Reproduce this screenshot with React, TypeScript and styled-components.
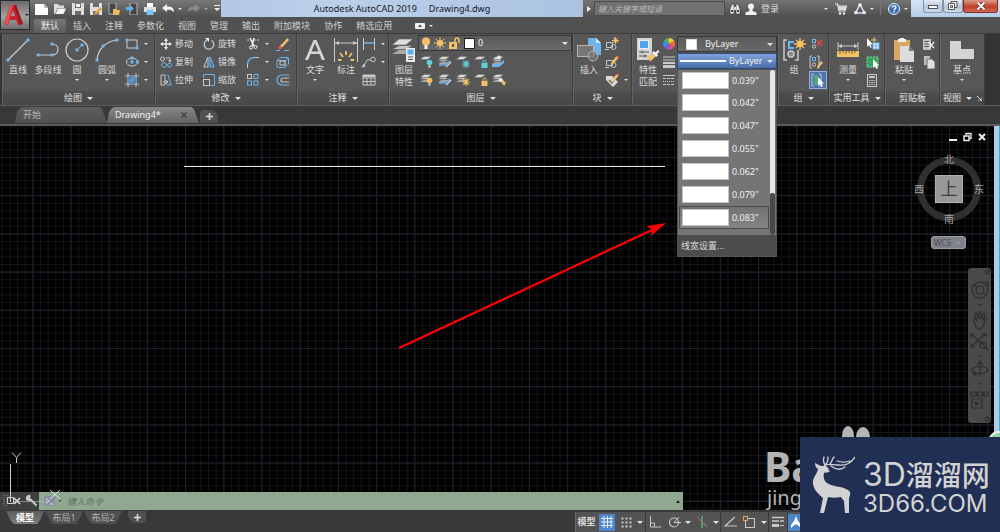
import React from 'react';
import styled, { createGlobalStyle, css } from 'styled-components';

const G = '#c9c9c9';
const B = '#6db5ee';
const Y = '#f3c266';
const T = '#5fd0dc';

const Global = createGlobalStyle`
  * { box-sizing: border-box; }
  html, body { margin: 0; padding: 0; background: #000; }
  body, button, input, select {
    font-family: "Noto Sans", "Noto Sans CJK SC", sans-serif;
    font-size: 9px;
    line-height: 12px;
    color: #dcdcdc;
  }
  button { margin: 0; padding: 0; border: 0; background: none; cursor: pointer; }
  svg { display: block; flex: none; }
`;

/* ---------- shared pieces ---------- */

type IcProps = { w: number; h: number; children: React.ReactNode };
const Ic = ({ w, h, children }: IcProps) => (
  <svg width={w} height={h} viewBox={`0 0 ${w} ${h}`} fill="none" aria-hidden="true">
    {children}
  </svg>
);

const Caret = styled.span<{ $c?: string }>`
  flex: none;
  width: 0;
  height: 0;
  border: 3px solid transparent;
  border-top-color: ${(p) => p.$c ?? '#e4e4e4'};
  border-bottom: 0;
`;

const SmallCaret = styled(Caret)`
  border-width: 2px;
  border-bottom: 0;
`;

/* ---------- header ---------- */

const Page = styled.div`
  position: relative;
  display: flex;
  flex-direction: column;
  min-height: 100vh;
  overflow: hidden;
  background: #383838;
`;

const Header = styled.header`
  display: flex;
  height: 33px;
  background: #515151;
`;

const AppButton = styled.button`
  display: flex;
  align-items: center;
  gap: 2px;
  flex: none;
  width: 30px;
  height: 30px;
  padding-left: 2px;
  border: 1px solid #2b2b2b;
  background: linear-gradient(#6a6a6a, #a2a2a2 55%, #6f6f6f);
`;

const HeaderMain = styled.div`
  flex: 1;
  min-width: 0;
`;

const TitleBar = styled.div`
  display: flex;
  height: 17px;
  background: linear-gradient(90deg, #9fb6d6, #bcd0ea 30%, #a9c1e0 60%, #bdd3ee);
`;

const QuickAccess = styled.div`
  display: flex;
  align-items: center;
  gap: 6px;
  flex: none;
  width: 191px;
  padding-left: 5px;
  background: linear-gradient(#787878, #5b5b5b 70%, #505050);
`;

const QuickButton = styled.button`
  display: flex;
  align-items: center;
  justify-content: center;
  gap: 4px;
  height: 16px;
`;

const Title = styled.h1`
  flex: 1;
  margin: 0;
  display: flex;
  align-items: center;
  justify-content: center;
  gap: 12px;
  font-size: 9px;
  font-weight: 400;
  color: #15181f;
  white-space: nowrap;
`;

const InfoBar = styled.div`
  display: flex;
  align-items: center;
  flex: none;
  width: 328px;
  background: linear-gradient(#747474, #5a5a5a 70%, #4e4e4e);
`;

const SearchToggle = styled.button`
  display: flex;
  align-items: center;
  justify-content: center;
  width: 11px;
  height: 17px;
`;

const SearchInput = styled.input`
  width: 131px;
  height: 15px;
  padding: 0 3px;
  border: 1px solid #4c4c4c;
  background: #717171;
  font-size: 8px;
  font-style: italic;
  &::placeholder { color: #b8b8b8; opacity: 1; }
`;

const InfoButton = styled.button<{ $grow?: boolean }>`
  display: flex;
  align-items: center;
  gap: 4px;
  height: 16px;
  padding-left: 4px;
  ${(p) => p.$grow && css`flex: 1;`}
`;

const InfoTools = styled.div`
  display: flex;
  align-items: center;
  gap: 3px;
  margin-right: 3px;
`;

const InfoDivider = styled.span`
  width: 1px;
  height: 13px;
  margin-left: 3px;
  background: #777;
`;

const WindowButtons = styled.div`
  display: flex;
  flex: none;
  width: 89px;
  padding-left: 12px;
  align-items: flex-start;
  background: linear-gradient(#d6e4f5, #b5cdea);
`;

const WindowButton = styled.button<{ $close?: boolean }>`
  display: flex;
  align-items: center;
  justify-content: center;
  width: ${(p) => (p.$close ? 35 : 20)}px;
  height: 13px;
  border: 1px solid ${(p) => (p.$close ? '#7d3028' : '#8494aa')};
  border-top: 0;
  border-radius: 0 0 3px 3px;
  background: ${(p) =>
    p.$close ? 'linear-gradient(#dd9a8c, #c3402c 55%, #cf6a50)' : 'linear-gradient(#e6edf6, #b7c6da 55%, #ccd9ea)'};
`;

const RibbonTabs = styled.nav`
  display: flex;
  align-items: stretch;
  height: 16px;
  padding: 2px 0 0 4px;
`;

const RibbonTab = styled.button<{ $active?: boolean }>`
  padding: 0 7px;
  white-space: nowrap;
  color: ${(p) => (p.$active ? '#f0f0f0' : '#cfcfcf')};
  ${(p) =>
    p.$active &&
    css`
      background: linear-gradient(#777, #5d5d5d);
      border-radius: 2px 2px 0 0;
    `}
`;

const RibbonToggle = styled.button`
  display: flex;
  align-items: center;
  gap: 4px;
  margin-left: 16px;
`;

/* ---------- ribbon ---------- */

const Ribbon = styled.section`
  display: flex;
  height: 73px;
  padding-left: 2px;
  background: #343434;
  border-top: 1px solid #3b3b3b;
  border-bottom: 1px solid #5e5e5e;
`;

const PanelBox = styled.section<{ $w: number }>`
  display: flex;
  flex-direction: column;
  flex: none;
  width: ${(p) => p.$w}px;
  border-right: 1px solid #3e3e3e;
  border-left: 1px solid #636363;
  background: #575757;
`;

const PanelBody = styled.div`
  display: flex;
  flex: 1;
  padding-top: 1px;
`;

const PanelFooter = styled.button`
  display: flex;
  align-items: center;
  justify-content: center;
  gap: 5px;
  height: 14px;
  background: linear-gradient(#4f4f4f, #474747);
  color: #e0e0e0;
`;

const Panel = ({ w, title, caret = true, extra, children }: {
  w: number; title?: string; caret?: boolean; extra?: React.ReactNode; children: React.ReactNode;
}) => (
  <PanelBox $w={w}>
    <PanelBody>{children}</PanelBody>
    <PanelFooter aria-label={title ?? 'panel'}>
      {title}
      {title && caret && <Caret />}
      {extra}
    </PanelFooter>
  </PanelBox>
);

const BigButtonBox = styled.button<{ $w: number }>`
  display: flex;
  flex-direction: column;
  align-items: center;
  flex: none;
  width: ${(p) => p.$w}px;
  height: 56px;
  white-space: nowrap;
`;

const BigIcon = styled.span`
  display: flex;
  align-items: center;
  height: 29px;
`;

const BigCaret = styled(SmallCaret)`
  margin-top: 3px;
`;

const BigButton = ({ w = 30, lines, caret, children }: {
  w?: number; lines: string[]; caret?: boolean; children: React.ReactNode;
}) => (
  <BigButtonBox $w={w}>
    <BigIcon>{children}</BigIcon>
    {lines.map((l) => <span key={l}>{l}</span>)}
    {caret && <BigCaret />}
  </BigButtonBox>
);

const Stack = styled.div<{ $w: number; $ml?: number }>`
  display: flex;
  flex-direction: column;
  flex: none;
  width: ${(p) => p.$w}px;
  margin-left: ${(p) => p.$ml ?? 0}px;
`;

const ToolButton = styled.button<{ $on?: boolean }>`
  display: flex;
  align-items: center;
  gap: 3px;
  height: 18px;
  white-space: nowrap;
  ${(p) =>
    p.$on &&
    css`
      justify-content: center;
      border: 1px solid #8fb2e0;
      background: #4e74ad;
    `}
`;

const ToolCaret = styled(SmallCaret)`
  margin-left: 2px;
`;

const LayerArea = styled.div`
  display: flex;
  flex-direction: column;
  flex: 1;
`;

const Field = styled.div<{ $blue?: boolean }>`
  position: relative;
  display: flex;
  align-items: center;
  gap: 3px;
  height: 16px;
  margin-bottom: 1px;
  padding: 0 3px 0 2px;
  border: 1px solid ${(p) => (p.$blue ? '#2e4a78' : '#383838')};
  background: ${(p) => (p.$blue ? 'linear-gradient(#7ea2da, #4a6ea8)' : 'linear-gradient(#5a5a5a, #6a6a6a)')};
`;

const Select = styled.select`
  flex: 1;
  min-width: 0;
  height: 14px;
  padding: 0;
  border: 0;
  background: transparent;
  appearance: none;
  outline: 0;
  color: #f0f0f0;
`;

const Swatch = styled.span`
  width: 11px;
  height: 11px;
  margin: 0 5px 0 6px;
  background: #fff;
  border: 1px solid #ddd;
`;

const LayerSwatch = styled(Swatch)`
  margin: 0;
  border-color: #222;
`;

const LineSample = styled.span`
  width: 46px;
  height: 2px;
  background: #fff;
`;

const IconRow = styled.div`
  display: flex;
  height: 18px;
`;

const IconButton = styled.button`
  display: flex;
  align-items: center;
  justify-content: center;
  width: 18px;
  height: 18px;
`;

const Combos = styled.div`
  flex: 1;
  padding-top: 1px;
`;

const Menu = styled.div`
  position: absolute;
  z-index: 5;
  top: 15px;
  left: -1px;
  right: -1px;
  border: 1px solid #555;
  background: #757575;
`;

const MenuScroll = styled.div`
  display: flex;
  height: 165px;
`;

const MenuList = styled.div`
  flex: 1;
  padding-left: 1px;
`;

const MenuRow = styled.button<{ $sel?: boolean; $first?: boolean }>`
  display: flex;
  align-items: center;
  gap: 3px;
  width: 100%;
  height: ${(p) => (p.$first ? 21 : 23)}px;
  padding-left: 2px;
  border: 1px solid ${(p) => (p.$sel ? '#4c4c4c' : 'transparent')};
  background: ${(p) => (p.$sel ? 'linear-gradient(#727272, #858585)' : 'none')};
  color: #f0f0f0;
`;

const Weight = styled.span`
  width: 47px;
  height: 17px;
  background: #fff;
  border: 1px solid #c4c4c4;
`;

const MenuTrack = styled.div`
  display: flex;
  flex-direction: column;
  justify-content: flex-end;
  width: 5px;
  margin: 0 1px;
  border-radius: 2px;
  background: #e6e6e6;
`;

const MenuThumb = styled.div`
  height: 42px;
  border-radius: 2px;
  background: #484848;
`;

const MenuFooter = styled.button`
  display: block;
  width: 100%;
  height: 21px;
  padding-left: 3px;
  background: #4c4c4c;
  text-align: left;
`;

/* ---------- file tabs ---------- */

const FileTabs = styled.nav`
  display: flex;
  align-items: flex-end;
  height: 20px;
  padding: 0 0 1px 15px;
  background: #383838;
  border-bottom: 2px solid #5a5a5a;
`;

const FileTab = styled.button<{ $active?: boolean }>`
  display: flex;
  align-items: center;
  justify-content: space-between;
  width: 92px;
  height: 16px;
  padding: 0 12px 0 8px;
  color: ${(p) => (p.$active ? '#f2f2f2' : '#b5b5b5')};
  background: ${(p) => (p.$active ? 'linear-gradient(#888, #626262)' : 'linear-gradient(#5e5e5e, #505050)')};
  clip-path: polygon(0 100%, 2px 5px, 5px 1px, 8px 0, calc(100% - 8px) 0, calc(100% - 5px) 2px, 100% 100%);
`;

const AddTab = styled.button<{ $down?: boolean }>`
  display: flex;
  align-items: center;
  justify-content: center;
  width: 18px;
  height: ${(p) => (p.$down ? 12 : 13)}px;
  margin-left: ${(p) => (p.$down ? 5 : 1)}px;
  border-radius: ${(p) => (p.$down ? '0 0 4px 8px' : '4px 8px 0 0')};
  background: #505050;
`;

/* ---------- drawing area ---------- */

const Canvas = styled.main`
  position: relative;
  flex: 1;
  min-height: 384px;
  overflow: hidden;
  background: #000;
`;

const Drawing = styled.svg`
  position: absolute;
  inset: 0;
  width: 100%;
  height: 100%;
`;

const Edge = styled.div`
  position: absolute;
  top: 0;
  bottom: 0;
  right: 0;
  width: 6px;
  border-right: 1px solid #1fb4e0;
  background: #b4cae6;
`;

const DocButtons = styled.div`
  position: absolute;
  top: 6px;
  right: 14px;
  display: flex;
  gap: 6px;
`;

const ViewCube = styled.div`
  position: absolute;
  top: 26px;
  right: 15px;
  display: grid;
  grid-template-columns: 12px 48px 12px;
  grid-template-rows: 14px 46px 14px;
  place-items: center;
  width: 72px;
  color: #a5a5a5;
`;

const Ring = styled.span`
  position: absolute;
  top: 5px;
  left: 4px;
  width: 64px;
  height: 64px;
  border: 7px solid #303030;
  border-radius: 50%;
`;

const Compass = styled.span<{ $area: string }>`
  position: relative;
  grid-area: ${(p) => p.$area};
  font-size: 10px;
`;

const CubeFace = styled.button`
  position: relative;
  grid-area: 2 / 2;
  width: 28px;
  height: 28px;
  background: #989898;
  border: 1px solid #b0b0b0;
  font-size: 17px;
  line-height: 24px;
  color: #3c3e42;
`;

const Wcs = styled.button`
  position: absolute;
  top: 110px;
  right: 34px;
  display: flex;
  align-items: center;
  justify-content: space-between;
  width: 35px;
  height: 13px;
  padding: 0 5px 0 2px;
  border: 1px solid #9a9ca2;
  border-radius: 3px;
  background: #80828a;
  color: #4a4c52;
  font-size: 8px;
`;

const NavBar = styled.div`
  position: absolute;
  top: 142px;
  right: 9px;
  display: flex;
  flex-direction: column;
  align-items: center;
  width: 23px;
  height: 155px;
  border-radius: 3px;
  background: #4a4a4a;
`;

const Watermark = styled.div`
  position: absolute;
  right: 146px;
  bottom: -1px;
  width: 87px;
  color: #b4b4b4;
`;

const WatermarkName = styled.div`
  margin-left: -3px;
  font-size: 41px;
  line-height: 38px;
  font-weight: 700;
`;

const WatermarkSub = styled.div`
  font-size: 20px;
  line-height: 26px;
`;

const CommandLine = styled.div`
  position: absolute;
  left: 0;
  bottom: 0;
  display: flex;
  align-items: center;
  width: 683px;
  max-width: 100%;
  height: 18px;
  background: #8fa991;
`;

const CommandTools = styled.div`
  display: flex;
  align-items: center;
  gap: 5px;
  width: 39px;
  height: 18px;
  padding-left: 3px;
  background: #404040;
`;

const CommandInput = styled.input`
  flex: 1;
  min-width: 0;
  height: 16px;
  margin-left: 3px;
  border: 0;
  background: transparent;
  font-style: italic;
  outline: 0;
  &::placeholder { color: #5f7062; opacity: 1; }
`;

const CommandPrompt = styled.button`
  display: flex;
  align-items: center;
  gap: 3px;
  margin-left: 5px;
`;

const Up = styled.span`
  margin-right: 3px;
  border: 2px solid transparent;
  border-top: 0;
  border-bottom: 3px solid #222;
`;

const Ucs = styled.svg`
  position: absolute;
  left: 0;
  bottom: 0;
`;

/* ---------- bottom bar ---------- */

const BottomBar = styled.footer`
  display: flex;
  justify-content: space-between;
  height: 22px;
  background: #393939;
`;

const LayoutTabs = styled.nav`
  display: flex;
  align-items: flex-start;
  gap: 1px;
  padding: 1px 0 0 6px;
`;

const LayoutTab = styled.button<{ $active?: boolean }>`
  width: 38px;
  height: 13px;
  color: ${(p) => (p.$active ? '#fff' : '#b4b4b4')};
  font-weight: ${(p) => (p.$active ? 700 : 400)};
  background: ${(p) => (p.$active ? 'linear-gradient(#5c5c5c, #7f7f7f)' : '#505050')};
  clip-path: polygon(0 0, 100% 0, calc(100% - 4px) 9px, calc(100% - 7px) 100%, 8px 100%, 5px 10px);
`;

const StatusBar = styled.div`
  display: flex;
  align-items: center;
  width: 425px;
  margin-top: 2px;
  border-left: 1px solid #6a6a6a;
  background: #535353;
`;

const StatusGroup = styled.div<{ $w: number }>`
  display: flex;
  align-items: center;
  justify-content: space-around;
  width: ${(p) => p.$w}px;
  height: 20px;
  border-right: 1px solid #3a3a3a;
`;

const StatusButton = styled.button<{ $on?: boolean; $strong?: boolean }>`
  display: flex;
  align-items: center;
  justify-content: center;
  height: 17px;
  min-width: 16px;
  font-weight: ${(p) => (p.$strong ? 700 : 400)};
  background: ${(p) => (p.$on ? '#4d86c8' : 'none')};
`;

/* ---------- logo badge ---------- */

const Badge = styled.aside`
  position: absolute;
  z-index: 6;
  right: 0;
  bottom: 0;
  display: flex;
  align-items: center;
  gap: 8px;
  width: 200px;
  height: 95px;
  padding-left: 11px;
  background: #212f55;
  color: #d2d2d2;
`;

const BadgeText = styled.div`
  padding-top: 6px;
`;

const BadgeName = styled.div`
  display: flex;
  align-items: baseline;
  font-size: 28px;
  line-height: 32px;
  font-weight: 500;
  white-space: nowrap;
`;

const BadgeLatin = styled.span`
  font-family: Inter, sans-serif;
  font-size: 32px;
  font-weight: 400;
`;

const BadgeSite = styled.div`
  font-family: Inter, sans-serif;
  font-size: 24px;
  font-weight: 400;
  line-height: 26px;
`;

/* ---------- icons ---------- */

const dot = (x: number, y: number) => <rect key={`${x}-${y}`} x={x - 1.5} y={y - 1.5} width="3" height="3" fill={B} />;

const LineIcon = () => <Ic w={24} h={24}><path d="M2 22L22 2" stroke={G} strokeWidth="1.2" />{dot(2, 22)}{dot(22, 2)}</Ic>;
const PolyIcon = () => <Ic w={24} h={24}><path d="M2 17h14c8 0 8-11 0-11" stroke={G} strokeWidth="1.2" />{dot(2, 17)}{dot(16, 17)}{dot(16, 6)}</Ic>;
const CircleIcon = () => <Ic w={24} h={24}><circle cx="12" cy="12" r="11" stroke={G} strokeWidth="1.2" /><path d="M12 12l5-5" stroke={B} />{dot(12, 12)}{dot(17, 7)}</Ic>;
const ArcIcon = () => <Ic w={24} h={24}><path d="M2 22C3 11 11 3 22 2" stroke={G} strokeWidth="1.2" />{dot(2, 22)}{dot(8, 8)}{dot(22, 2)}</Ic>;
const RectIcon = () => <Ic w={14} h={12}><rect x="2" y="2" width="10" height="8" stroke={G} />{dot(2, 2)}{dot(12, 10)}</Ic>;
const EllipseIcon = () => <Ic w={14} h={12}><ellipse cx="7" cy="6" rx="5.5" ry="4" stroke={G} />{dot(7, 6)}{dot(12.5, 6)}{dot(7, 2)}</Ic>;
const HatchIcon = () => <Ic w={14} h={14}><path d="M3 0v14M11 0v14M0 3h14M0 11h14" stroke={G} /><rect x="3.5" y="3.5" width="7" height="7" fill="#3d78b0" /><path d="M4 8l4-4M4 10l6-6M6 10l4-4" stroke={B} /></Ic>;

const MoveIcon = () => <Ic w={12} h={12}><path d="M6 1v10M1 6h10" stroke="#e8e8e8" strokeWidth="1.4" /><path d="M6 0l2 3H4zM6 12l2-3H4zM0 6l3-2v4zM12 6L9 4v4z" fill="#e8e8e8" /></Ic>;
const RotateIcon = () => <Ic w={12} h={12}><path d="M8.500 2.300a4.800 4.800 0 1 1-4.600-.2" stroke={G} strokeWidth="1.3" /><path d="M2 0h4v4z" fill="#eee" /></Ic>;
const CopyIcon = () => <Ic w={12} h={12}><circle cx="2.500" cy="3" r="2" stroke={G} /><path d="M6 2h4v3M8.500 4L10 6l1.500-2" stroke={G} /><circle cx="4" cy="9" r="2.400" stroke={B} /><circle cx="9.500" cy="9" r="2" stroke={B} /></Ic>;
const MirrorIcon = () => <Ic w={12} h={12}><path d="M5 1v10H.8z" stroke={G} /><path d="M7 1v10h4.200z" stroke={B} fill="#3d78b0" /></Ic>;
const StretchIcon = () => <Ic w={12} h={12}><path d="M1 1h4v10H1z" stroke={G} /><path d="M7 1h1l3 10H7" stroke={B} /><path d="M3 8h4M6 6l2 2-2 2" stroke={G} /></Ic>;
const ScaleIcon = () => <Ic w={12} h={12}><path d="M.5 4V.5h11v11H7" stroke={B} /><rect x=".5" y="5.500" width="6" height="6" stroke={G} /></Ic>;
const TrimIcon = () => <Ic w={14} h={12}><path d="M1 2h4M8 2h5" stroke={G} strokeDasharray="2 1" /><path d="M4 0l4 8M8 0L6 8" stroke="#eee" strokeWidth="1.500" /><circle cx="5" cy="9.500" r="1.500" stroke="#eee" /><circle cx="9.500" cy="9" r="1.500" stroke="#eee" /></Ic>;
const FilletIcon = () => <Ic w={14} h={12}><path d="M1.500 8C2 4 5 1.500 9 1.500" stroke={B} strokeWidth="1.300" /><path d="M1.500 12V8M9 1.500h4" stroke={G} /></Ic>;
const ArrayIcon = () => <Ic w={14} h={12}><rect x="1.500" y=".5" width="4" height="4" stroke={G} /><rect x="8" y=".5" width="4" height="4" stroke={B} /><rect x="1.500" y="7" width="4" height="4" stroke={B} /><rect x="8" y="7" width="4" height="4" stroke={B} /></Ic>;
const EraseIcon = () => <Ic w={14} h={13}><path d="M11.500 0L13 2 6 9.500 4 8z" fill={Y} /><path d="M4 7.500L6.500 10 4 11.500 2 10z" fill="#ef5b45" /><path d="M0 12.500h4M8 12.500h5" stroke={B} /></Ic>;
const ExplodeIcon = () => <Ic w={14} h={12}><path d="M1 4.500l3-3h8l-2 3zM1 4.500v7h8v-7M9.500 11l3-3V2" stroke={B} /><rect x="4" y="5" width="5" height="4" stroke={G} /></Ic>;
const OffsetIcon = () => <Ic w={14} h={12}><path d="M13 1H6a4.500 4.500 0 0 0 0 10h7" stroke={B} strokeWidth="1.200" /><path d="M13 4H7a2 2 0 0 0 0 4h6" stroke={G} strokeWidth="1.200" /></Ic>;

const TextIcon = () => <Ic w={20} h={22}><path d="M8.500 1h3L20 21h-3.200l-2.300-6h-9l-2.300 6H0zM10 4l-3.500 8.500h7z" fill="#d6d6d6" /></Ic>;
const DimIcon = () => <Ic w={26} h={24}><path d="M1.500 0v24M24.500 0v24" stroke={G} /><path d="M2 5h22" stroke={G} /><path d="M2 5l4-2v4zM24 5l-4-2v4z" fill={G} /><path d="M13 13v4M5 22h3.500M17.500 22H21M7 15l3 4M19 15l-3 4" stroke={Y} strokeWidth="1.800" /></Ic>;
const LinearIcon = () => <Ic w={14} h={12}><path d="M1.500 0v12M12.500 0v12" stroke={G} /><path d="M2 5h10" stroke={B} strokeWidth="1.500" /></Ic>;
const LeaderIcon = () => <Ic w={14} h={12}><path d="M1 11l4-7h4" stroke={G} /><circle cx="11" cy="3.500" r="2.300" stroke={G} /><path d="M0 12l1-4 3 2z" fill={G} /></Ic>;
const TableIcon = () => <Ic w={14} h={12}><path d="M1 1h12v10H1zM1 4h12M1 7.500h12M5 4v7M9 4v7" stroke={G} /><path d="M1 2h12" stroke={G} strokeWidth="2" /></Ic>;

const LayerPropsIcon = () => (
  <Ic w={24} h={26}>
    <path d="M0 17l7-4h14l-7 4z" fill="#a9a9a9" /><path d="M0 12.500l7-4h14l-7 4z" fill="#c4c4c4" stroke="#575757" strokeWidth=".6" />
    <path d="M0 8l7-6h14l-7 6z" fill="#dedede" stroke="#575757" strokeWidth=".6" />
    <rect x="14" y="11" width="9" height="14" fill="#ececec" /><rect x="15.500" y="12.500" width="6" height="5" fill="#57aef2" /><path d="M16 20h5M16 22.500h5" stroke="#555" />
  </Ic>
);
const BulbIcon = () => <Ic w={10} h={12}><circle cx="5" cy="4.500" r="4" fill={Y} /><rect x="3.500" y="8" width="3" height="4" fill="#eee" /></Ic>;
const SunIcon = () => <Ic w={12} h={12}><circle cx="6" cy="6" r="3" fill={Y} /><path d="M6 0v12M0 6h12M1.800 1.800l8.400 8.400M10.200 1.800l-8.400 8.400" stroke={Y} /></Ic>;
const LockIcon = () => <Ic w={12} h={12}><rect x="0" y="5" width="8" height="7" fill={Y} /><path d="M6 5V3a2 2 0 0 1 4 0v3" stroke={Y} strokeWidth="1.500" /><rect x="3" y="7" width="2" height="3" fill="#555" /></Ic>;

const Sheets = ({ n, children }: { n: number; children?: React.ReactNode }) => (
  <Ic w={14} h={13}>
    {n > 2 && <path d="M0 9l3.500-2H11L7.500 9z" fill="#a5a5a5" />}
    {n > 1 && <path d="M0 6.500l3.500-2H11l-3.500 2z" fill="#bdbdbd" stroke="#575757" strokeWidth=".5" />}
    <path d="M0 4.500L4 1.500h7.500l-4 3z" fill="#dadada" stroke="#575757" strokeWidth=".4" />
    {children}
  </Ic>
);
const miniBulb = (c: string) => <><circle cx="9.500" cy="7.500" r="2.800" fill={c} /><rect x="8.500" y="10.500" width="2" height="2" fill="#eee" /></>;
const miniSun = (c: string) => <path d="M10 5v8M6 9h8M7.200 6.200l5.600 5.600M12.800 6.200l-5.600 5.600" stroke={c} strokeWidth="1.200" />;
const miniLock = (c: string) => <><rect x="7.500" y="8" width="6" height="5" fill={c} /><path d="M9 8V6.500a1.500 1.500 0 0 1 3 0V8" stroke={c} /></>;
const miniArrow = <><path d="M1 10h6l5-4" stroke={B} strokeWidth="1.500" /><path d="M8 12l5-5" stroke="#ddd" strokeWidth="1.300" /></>;

const InsertIcon = () => <Ic w={24} h={24}><path d="M11 0h8l5 5v12H11z" fill="#6fb3ea" /><path d="M19 0v5h5z" fill="#cde5fa" /><rect x=".5" y="7.500" width="16" height="11" fill="#777" stroke="#b5b5b5" /><circle cx="16" cy="18" r="5" fill="#777" fillOpacity=".7" stroke="#b5b5b5" /></Ic>;
const BlockBase = ({ children }: { children: React.ReactNode }) => <Ic w={14} h={14}><path d="M1.500 5.500h6v5h-6zM0 12.500h4" stroke={G} /><circle cx="8.500" cy="10" r="2.500" stroke={G} />{children}</Ic>;
const pencil = <><path d="M11.500 1L13.500 3 8 9l-2 .5.5-2z" fill={Y} /><path d="M11 1.500l1.500-1.300L14 2l-1.200 1.200z" fill="#ef5b45" /></>;
const TagIcon = () => <Ic w={14} h={14}><path d="M1 3h6l6 6-5 5-7-7z" fill="#d9d9d9" /><path d="M4 7l3 3 4-6" stroke="#555" strokeWidth="1.300" />{pencil}</Ic>;
const MatchIcon = () => <Ic w={24} h={26}><rect x="1" y="1" width="15" height="22" fill="#d5d5d5" /><rect x="3.500" y="3.500" width="9" height="8" fill="#4fa6ee" stroke="#eee" /><path d="M3 15h10M3 19h8M6 13.500v3M9 17.500v3" stroke="#555" /><path d="M11 21l5-5 3.500 3.500-5 5z" fill={Y} /><path d="M16 16l2-2 1.500 1.500L22 13l1.500 1.500L21 17l1 1.500-2 1.500z" fill="#f3f3f3" /></Ic>;
const WheelIcon = () => (
  <Ic w={12} h={12}>
    {['#f7c531', '#ef6a3a', '#dd4b8a', '#7b5ad8', '#3a8ee8', '#44b95a'].map((c, i) => (
      <path key={c} d="M6 6V0a6 6 0 0 1 5.200 3z" fill={c} transform={`rotate(${i * 60} 6 6)`} />
    ))}
  </Ic>
);
const WeightsIcon = () => <Ic w={12} h={12}><path d="M0 1h12M0 4h12" stroke={G} /><path d="M0 7h12" stroke={G} strokeWidth="2" /><path d="M0 10.500h12" stroke={G} strokeWidth="3" /></Ic>;
const TypesIcon = () => <Ic w={12} h={12}><path d="M0 1.500h12" stroke={G} /><path d="M0 4.500h12M0 10.500h12" stroke={G} strokeDasharray="3 1" /><path d="M0 7.500h12" stroke={G} strokeDasharray="1 1" /></Ic>;

const GroupIcon = () => <Ic w={24} h={24}><path d="M5 2H2v20h3M13 22h3V12" stroke={G} strokeWidth="1.500" /><path d="M12 4H7v6h5" stroke={B} strokeWidth="2" /><circle cx="9" cy="16" r="3" fill="#888" stroke={G} strokeWidth="1.500" /><path d="M18 0v12M12 6h12M14 2l8 8M22 2l-8 8" stroke={Y} strokeWidth="1.300" /><circle cx="18" cy="6" r="3.200" fill={Y} /></Ic>;
const MiniGroup = ({ bracket = true, children }: { bracket?: boolean; children: React.ReactNode }) => (
  <Ic w={14} h={14}>{bracket && <path d="M3 1H1v12h2M8 1h2v12H8" stroke={G} />}<rect x="3.500" y="2.500" width="3" height="3" stroke={B} /><circle cx="5" cy="9.500" r="1.700" stroke={G} />{children}</Ic>
);
const cursor = <path d="M7 4v9l2-2 1.500 3 1.500-1-1.300-2.500H13z" fill="#fff" />;
const MeasureIcon = () => <Ic w={22} h={16}><path d="M1 0v8M21 0v8M2 4h18" stroke={G} /><path d="M1 4l4-2v4zM21 4l-4-2v4z" fill={G} /><rect x="0" y="9" width="22" height="6" fill={Y} /><path d="M3 9v3M6 9v2M9 9v3M12 9v2M15 9v3M18 9v2" stroke="#7a5a20" /></Ic>;
const QuickSelIcon = () => <Ic w={14} h={14}><path d="M1 1v9l2-2 1.500 3 1.200-.8L4.500 7.500H7z" fill="#fff" /><path d="M8 0v6M5 3h6" stroke={Y} /><rect x="7" y="6" width="6" height="6" fill="#dff0ff" stroke={B} /><path d="M10 6v6M7 9h6" stroke={B} /></Ic>;
const SelAllIcon = () => <Ic w={14} h={14}><rect x="1" y="2" width="11" height="10" fill="#35a35c" stroke="#7fe0a0" strokeDasharray="2 1" />{cursor}</Ic>;
const CalcIcon = () => <Ic w={12} h={13}><rect x="1.500" y=".5" width="9" height="12" stroke={G} /><path d="M3 3h6" stroke={G} strokeWidth="2" /><path d="M3 6.500h6M3 8.500h6M3 10.500h6" stroke={G} strokeDasharray="1.500 .8" /></Ic>;
const PasteIcon = () => <Ic w={20} h={24}><path d="M0 2h16v20H0z" fill="#d9a867" /><path d="M4 1h2a2 2 0 0 1 4 0h2v3H4z" fill="#f0f0f0" /><path d="M6 8h9l5 5v11H6z" fill="#dcdcdc" /><path d="M15 8v5h5z" fill="#777" /></Ic>;
const CutIcon = () => <Ic w={14} h={13}><path d="M1 1h8v11H1z" fill="#c4c4c4" /><path d="M2.500 3.500h5M2.500 6h5M2.500 8.500h5" stroke="#575757" /><path d="M6 4l6 6M12 4l-5 6" stroke="#eee" strokeWidth="1.300" /></Ic>;
const CopyClipIcon = () => <Ic w={14} h={13}><path d="M2 0h6v9H2z" fill="#bdbdbd" /><path d="M5 3h5l3 3v7H5z" fill="#dedede" stroke="#575757" strokeWidth=".8" /></Ic>;
const BaseIcon = () => <Ic w={24} h={20}><path d="M0 1h11v8h13v10H0z" fill="#d4d4d4" /></Ic>;

const quickIcons: [string, React.ReactNode][] = [
  ['新建', <Ic w={13} h={12}><path d="M0 1h9l4 4v7H0z" fill="#fafafa" /><path d="M9 1v4h4z" fill="#bbb" /></Ic>],
  ['打开', <Ic w={12} h={12}><path d="M0 1h4l1 1.500h5V5H3.500L1 11H0z" fill="#dcdcdc" /><path d="M4 5.500h8L9.500 11H1.500z" fill="#f4f4f4" /></Ic>],
  ['保存', <Ic w={12} h={12}><path d="M0 0h12v12H0z" fill="#dedede" /><path d="M3 0h6v5H3zM3 8h6v4H3z" fill="#6d6d6d" /><path d="M4 1h4v3H4z" fill="#f5f5f5" /></Ic>],
  ['另存为', <Ic w={12} h={12}><path d="M0 0h12v12H0z" fill="#dedede" /><path d="M3 0h6v4H3zM3 8h6v4H3z" fill="#6d6d6d" /><path d="M10 4l2 2-5 5-3 1 1-3z" fill="#e8a04a" /></Ic>],
  ['从移动设备打开', <Ic w={12} h={12}><path d="M1 0h7v11H1z" fill="#454545" stroke="#ddd" strokeWidth=".7" /><path d="M5 6h3l1 1h3l-1 5H5z" fill="#f0b95a" /></Ic>],
  ['保存到移动设备', <Ic w={12} h={12}><path d="M4 0h7v12H4z" fill="#454545" stroke="#ddd" strokeWidth=".7" /><path d="M0 4h4V2l4 3.500L4 9V7H0z" fill="#55b4f5" /></Ic>],
  ['打印', <Ic w={12} h={12}><path d="M3 0h6v4H3z" fill="#fff" /><path d="M0 4h12v5H0z" fill="#dfdfdf" /><path d="M2.500 7h7v5h-7z" fill="#76c3f5" /></Ic>],
];

const ribbonTabs = ['默认', '插入', '注释', '参数化', '视图', '管理', '输出', '附加模块', '协作', '精选应用'];
const weights = ['0.039"', '0.042"', '0.047"', '0.055"', '0.062"', '0.079"', '0.083"'];

/* ---------- sections ---------- */

const TopHeader = () => (
  <Header>
    <AppButton aria-label="应用程序菜单">
      <Ic w={20} h={22}>
        <path d="M7 1h6l7 19-5 1-2-5H7l-2 5-4-1zM10 6l-2 6h4z" fill="#c3262e" fillRule="evenodd" />
        <path d="M7 1h3L5 20l-4 1z" fill="#e4514f" />
        <path d="M13 1l7 19-3 1L11 2z" fill="#9c1820" />
      </Ic>
      <SmallCaret $c="#222" />
    </AppButton>
    <HeaderMain>
      <TitleBar>
        <QuickAccess>
          {quickIcons.map(([name, icon]) => <QuickButton key={name} aria-label={name}>{icon}</QuickButton>)}
          <QuickButton aria-label="放弃">
            <Ic w={12} h={10}><path d="M0 4l5-4v2.500c4 0 7 1 7 5.500-2-2-4-2.500-7-2.300V8z" fill="#f2f2f2" /></Ic>
            <SmallCaret />
          </QuickButton>
          <QuickButton aria-label="重做">
            <Ic w={12} h={10}><path d="M12 4L7 0v2.500C3 2.500 0 3.500 0 8c2-2 4-2.500 7-2.300V8z" fill="#8c8c8c" /></Ic>
            <SmallCaret $c="#aaa" />
          </QuickButton>
          <QuickButton aria-label="自定义">
            <Ic w={6} h={7}><path d="M0 .5h6" stroke="#eee" /><path d="M0 3h6L3 6z" fill="#eee" /></Ic>
          </QuickButton>
        </QuickAccess>
        <Title><span>Autodesk AutoCAD 2019</span><span>Drawing4.dwg</span></Title>
        <InfoBar>
          <SearchToggle aria-label="展开搜索"><Ic w={4} h={6}><path d="M0 0l4 3-4 3z" fill="#eee" /></Ic></SearchToggle>
          <SearchInput aria-label="搜索" placeholder="键入关键字或短语" />
          <InfoButton aria-label="搜索帮助">
            <Ic w={12} h={12}><path d="M1 11V6l2-5h2v10zM7 11V1h2l2 5v5z" fill="#e8e8e8" stroke="#333" strokeWidth=".6" /><path d="M5 4h2v3H5z" fill="#ddd" /><path d="M2 8h2M8 8h2" stroke="#444" strokeWidth="2" /></Ic>
          </InfoButton>
          <InfoButton $grow>
            <Ic w={12} h={12}><circle cx="6" cy="3.500" r="3" fill="#f0f0f0" /><path d="M4.500 6h3v2l4 1.500V12H.5V9.500l4-1.500z" fill="#f0f0f0" /></Ic>
            登录
          </InfoButton>
          <InfoTools>
            <SmallCaret />
            <InfoButton aria-label="购物车"><Ic w={12} h={12}><path d="M0 1h2.500l1.500 7h6l1.500-5H3" stroke="#eee" strokeWidth="1.200" /><path d="M3.500 3.500h7.500L10 7H4.500z" fill="#ddd" /><circle cx="5" cy="10.500" r="1.200" fill="#eee" /><circle cx="9" cy="10.500" r="1.200" fill="#eee" /></Ic></InfoButton>
            <InfoButton aria-label="Autodesk 应用">
              <Ic w={12} h={12}><path d="M6 1.500L10.500 10h-9z" stroke="#cfd9ea" strokeWidth="1.600" /><circle cx="6" cy="2" r="1.800" fill="#eee" /><circle cx="1.800" cy="9.500" r="1.800" fill="#eee" /><circle cx="10.200" cy="9.500" r="1.800" fill="#eee" /></Ic>
              <SmallCaret />
            </InfoButton>
            <InfoDivider />
            <InfoButton aria-label="帮助">
              <Ic w={12} h={12}><circle cx="6" cy="6" r="5.500" fill="#3c6fb5" stroke="#f0f4fa" /><path d="M4.200 4.600c0-2.400 3.800-2.200 3.700 0 0 1.300-1.800 1.300-1.800 2.800M6.100 8.300v1.300" stroke="#fff" strokeWidth="1.300" /></Ic>
              <SmallCaret />
            </InfoButton>
          </InfoTools>
        </InfoBar>
        <WindowButtons>
          <WindowButton aria-label="最小化"><Ic w={10} h={8}><rect x=".5" y="3.500" width="9" height="3" fill="#fff" stroke="#555" /></Ic></WindowButton>
          <WindowButton aria-label="还原"><Ic w={10} h={10}><path d="M3 .5h6v6H3z" fill="#eee" stroke="#555" /><path d="M.5 2.500h6v6h-6z" fill="#fff" stroke="#555" /><path d="M2.500 4.500h2v2h-2z" stroke="#555" /></Ic></WindowButton>
          <WindowButton $close aria-label="关闭"><Ic w={10} h={8}><path d="M1.500.5l7 7M8.500.5l-7 7" stroke="#5a2a28" strokeWidth="3.400" /><path d="M1.500.5l7 7M8.500.5l-7 7" stroke="#fff" strokeWidth="2" /></Ic></WindowButton>
        </WindowButtons>
      </TitleBar>
      <RibbonTabs>
        {ribbonTabs.map((t, i) => <RibbonTab key={t} $active={i === 0}>{t}</RibbonTab>)}
        <RibbonToggle aria-label="最小化功能区">
          <Ic w={10} h={6}><rect width="10" height="6" rx="1" fill="#f0f0f0" /><path d="M3 4l2-2.500L7 4z" fill="#444" /></Ic>
          <SmallCaret />
        </RibbonToggle>
      </RibbonTabs>
    </HeaderMain>
  </Header>
);

const RibbonBar = () => (
  <Ribbon>
    <Panel w={153} title="绘图">
      <BigButton lines={['直线']}><LineIcon /></BigButton>
      <BigButton lines={['多段线']}><PolyIcon /></BigButton>
      <BigButton w={28} lines={['圆']} caret><CircleIcon /></BigButton>
      <BigButton w={32} lines={['圆弧']} caret><ArcIcon /></BigButton>
      <Stack $w={26} $ml={2}>
        <ToolButton aria-label="矩形"><RectIcon /><ToolCaret /></ToolButton>
        <ToolButton aria-label="椭圆"><EllipseIcon /><ToolCaret /></ToolButton>
        <ToolButton aria-label="图案填充"><HatchIcon /><ToolCaret /></ToolButton>
      </Stack>
    </Panel>
    <Panel w={142} title="修改">
      <Stack $w={43} $ml={4}>
        <ToolButton><MoveIcon />移动</ToolButton>
        <ToolButton><CopyIcon />复制</ToolButton>
        <ToolButton><StretchIcon />拉伸</ToolButton>
      </Stack>
      <Stack $w={43}>
        <ToolButton><RotateIcon />旋转</ToolButton>
        <ToolButton><MirrorIcon />镜像</ToolButton>
        <ToolButton><ScaleIcon />缩放</ToolButton>
      </Stack>
      <Stack $w={30}>
        <ToolButton aria-label="修剪"><TrimIcon /><ToolCaret /></ToolButton>
        <ToolButton aria-label="圆角"><FilletIcon /><ToolCaret /></ToolButton>
        <ToolButton aria-label="阵列"><ArrayIcon /><ToolCaret /></ToolButton>
      </Stack>
      <Stack $w={14}>
        <ToolButton aria-label="删除"><EraseIcon /></ToolButton>
        <ToolButton aria-label="分解"><ExplodeIcon /></ToolButton>
        <ToolButton aria-label="偏移"><OffsetIcon /></ToolButton>
      </Stack>
    </Panel>
    <Panel w={92} title="注释">
      <BigButton w={34} lines={['文字']} caret><TextIcon /></BigButton>
      <BigButton w={28} lines={['标注']}><DimIcon /></BigButton>
      <Stack $w={26} $ml={2}>
        <ToolButton aria-label="线性"><LinearIcon /><ToolCaret /></ToolButton>
        <ToolButton aria-label="引线"><LeaderIcon /><ToolCaret /></ToolButton>
        <ToolButton aria-label="表格"><TableIcon /></ToolButton>
      </Stack>
    </Panel>
    <Panel w={184} title="图层">
      <BigButton w={28} lines={['图层', '特性']}><LayerPropsIcon /></BigButton>
      <LayerArea>
        <Field>
          <BulbIcon /><SunIcon /><LockIcon /><LayerSwatch />
          <Select aria-label="图层"><option>0</option></Select>
          <Caret />
        </Field>
        <IconRow>
          <IconButton aria-label="关闭图层"><Sheets n={1}>{miniBulb(T)}</Sheets></IconButton>
          <IconButton aria-label="隔离"><Sheets n={3}>{miniArrow}</Sheets></IconButton>
          <IconButton aria-label="冻结"><Sheets n={1}>{miniSun(T)}</Sheets></IconButton>
          <IconButton aria-label="锁定"><Sheets n={1}>{miniLock(T)}</Sheets></IconButton>
          <IconButton aria-label="置为当前"><Sheets n={3}><path d="M0 9h7l5-4v3l-5 4H0z" fill={B} /><circle cx="7" cy="2.500" r="2" fill="#e5e5e5" /></Sheets></IconButton>
        </IconRow>
        <IconRow>
          <IconButton aria-label="打开所有图层"><Sheets n={3}>{miniBulb(Y)}</Sheets></IconButton>
          <IconButton aria-label="取消隔离"><Sheets n={3}>{miniArrow}</Sheets></IconButton>
          <IconButton aria-label="解冻"><Sheets n={3}>{miniSun(Y)}</Sheets></IconButton>
          <IconButton aria-label="解锁"><Sheets n={1}>{miniLock(Y)}</Sheets></IconButton>
          <IconButton aria-label="匹配图层"><Sheets n={3}><path d="M7 6l2-1 5 5-2 3z" fill={Y} /><path d="M6 7l3-2 2 2-3 2z" fill="#f3f3f3" /></Sheets></IconButton>
        </IconRow>
      </LayerArea>
    </Panel>
    <Panel w={59} title="块">
      <BigButton lines={['插入']}><InsertIcon /></BigButton>
      <Stack $w={26} $ml={1}>
        <ToolButton aria-label="创建块"><BlockBase><path d="M10.500 0v7M7 3.500h7M8 1l5 5M13 1L8 6" stroke={Y} /></BlockBase></ToolButton>
        <ToolButton aria-label="编辑块"><BlockBase>{pencil}</BlockBase></ToolButton>
        <ToolButton aria-label="编辑属性"><TagIcon /><ToolCaret /></ToolButton>
      </Stack>
    </Panel>
    <Panel w={146}>
      <BigButton lines={['特性', '匹配']}><MatchIcon /></BigButton>
      <Stack $w={14}>
        <ToolButton aria-label="对象颜色"><WheelIcon /></ToolButton>
        <ToolButton aria-label="线宽"><WeightsIcon /></ToolButton>
        <ToolButton aria-label="线型"><TypesIcon /></ToolButton>
      </Stack>
      <Combos>
        <Field>
          <Swatch />
          <Select aria-label="颜色"><option>ByLayer</option></Select>
          <Caret />
        </Field>
        <Field $blue>
          <LineSample />
          <Select aria-label="线宽"><option>ByLayer</option></Select>
          <Caret />
          <Menu>
            <MenuScroll>
              <MenuList role="listbox" aria-label="线宽列表">
                {weights.map((v, i) => (
                  <MenuRow key={v} role="option" aria-selected={i === 6} $first={i === 0} $sel={i === 6}><Weight />{v}</MenuRow>
                ))}
              </MenuList>
              <MenuTrack><MenuThumb /></MenuTrack>
            </MenuScroll>
            <MenuFooter>线宽设置...</MenuFooter>
          </Menu>
        </Field>
      </Combos>
    </Panel>
    <Panel w={51} title="组">
      <BigButton lines={['组']}><GroupIcon /></BigButton>
      <Stack $w={18}>
        <ToolButton aria-label="解除编组"><MiniGroup bracket={false}><path d="M8 3l5 6M13 3L8 9" stroke="#e04a3c" strokeWidth="1.600" /></MiniGroup></ToolButton>
        <ToolButton aria-label="组编辑"><MiniGroup><path d="M12 6l2 2-4 4-2 1 .5-2z" fill={Y} /></MiniGroup></ToolButton>
        <ToolButton $on aria-label="启用组选择"><MiniGroup><path d="M3 2h4v9H3z" fill="#45b07c" />{cursor}</MiniGroup></ToolButton>
      </Stack>
    </Panel>
    <Panel w={56} title="实用工具">
      <BigButton w={36} lines={['测量']} caret><MeasureIcon /></BigButton>
      <Stack $w={14}>
        <ToolButton aria-label="快速选择"><QuickSelIcon /></ToolButton>
        <ToolButton aria-label="全部选择"><SelAllIcon /></ToolButton>
        <ToolButton aria-label="计算器"><CalcIcon /></ToolButton>
      </Stack>
    </Panel>
    <Panel w={55} title="剪贴板" caret={false}>
      <BigButton w={36} lines={['粘贴']} caret><PasteIcon /></BigButton>
      <Stack $w={14}>
        <ToolButton aria-label="剪切"><CutIcon /></ToolButton>
        <ToolButton aria-label="复制"><CopyClipIcon /></ToolButton>
      </Stack>
    </Panel>
    <Panel w={45} title="视图" extra={<Ic w={5} h={5}><path d="M0 0l4 4M5 1v4H1" stroke="#ddd" /></Ic>}>
      <BigButton w={42} lines={['基点']} caret><BaseIcon /></BigButton>
    </Panel>
  </Ribbon>
);

const Plus = () => <Ic w={7} h={7}><path d="M3.500 0v7M0 3.500h7" stroke="#ddd" strokeWidth="1.600" /></Ic>;

const NavIcons = () => (
  <Ic w={23} h={155}>
    <g stroke="#2d2d2d" strokeWidth="1.200">
      <circle cx="19.500" cy="4" r="2" />
      <circle cx="12" cy="22" r="8" /><circle cx="12" cy="22" r="4" /><path d="M12 14h8v4M6 17l3 2M18 27l-3-2" />
      <path d="M6 53c-1-3 1-4 2-2l1 2-2-7c0-2 2-2 2 0l2 5v-6c0-2 2-2 2 0v6l2-5c1-1 2 0 2 1l-2 5 2-2c2 0 1 2 0 3-1 4-3 8-6 8s-4-3-5-8z" />
      <path d="M4 67l12 10M17 66L4 78" /><circle cx="15" cy="77" r="3" /><path d="M17 79l3 3M3 70v-4h4M14 66h4v3M3 75v4h4" />
      <path d="M12 94v15M9 97l3-4 3 4" /><ellipse cx="12" cy="102" rx="8" ry="3.500" /><path d="M8 104l-3 2 4 2" />
      <path d="M3 124h5v4H3zM9.500 124h5v4h-5zM16 124h4v4h-4zM4 131h10v9H4z" />
      <circle cx="19.500" cy="151" r="2" />
    </g>
    <path d="M7 133l5 2.500-5 2.500zM10 36h4l-2 2zM10 87h4l-2 2zM10 115h4l-2 2z" fill="#2d2d2d" />
  </Ic>
);

const Workspace = () => (
  <Canvas>
    <Drawing>
      <defs>
        <pattern id="minor" x="32.300" y="31" width="7.640" height="7.640" patternUnits="userSpaceOnUse">
          <path d="M.5 0v7.640M0 .5h7.640" stroke="#141418" />
        </pattern>
        <pattern id="major" x="32.300" y="31" width="38.200" height="38.200" patternUnits="userSpaceOnUse">
          <path d="M.5 0v38.200M0 .5h38.200" stroke="#1e212d" />
        </pattern>
      </defs>
      <rect width="100%" height="100%" fill="url(#minor)" />
      <rect width="100%" height="100%" fill="url(#major)" />
      <path d="M184 40.500h481" stroke="#e8e8e8" />
      <path d="M399 222l253-118" stroke="#f00" strokeWidth="2.200" />
      <path d="M666 97l-19 3 5 4-1 6z" fill="#f00" />
    </Drawing>
    <DocButtons>
      <button aria-label="最小化图形"><Ic w={8} h={10}><path d="M0 8h8" stroke="#eee" strokeWidth="2" /></Ic></button>
      <button aria-label="还原图形"><Ic w={9} h={10}><path d="M3 3V1.500h5v5H6.500" stroke="#eee" strokeWidth="1.300" /><path d="M1 4h5v4.500H1z" stroke="#eee" strokeWidth="1.500" /></Ic></button>
      <button aria-label="关闭图形"><Ic w={8} h={10}><path d="M1 2l6 6M7 2L1 8" stroke="#eee" strokeWidth="2" /></Ic></button>
    </DocButtons>
    <ViewCube>
      <Ring />
      <Compass $area="1 / 2">北</Compass>
      <Compass $area="2 / 1">西</Compass>
      <CubeFace>上</CubeFace>
      <Compass $area="2 / 3">东</Compass>
      <Compass $area="3 / 2">南</Compass>
    </ViewCube>
    <Wcs>WCS<SmallCaret $c="#9a9f98" /></Wcs>
    <NavBar><NavIcons /></NavBar>
    <Edge />
    <Watermark>
      <WatermarkName>Ba</WatermarkName>
      <WatermarkSub>jing</WatermarkSub>
    </Watermark>
    <CommandLine>
      <CommandTools>
        <Ic w={5} h={14}><path d="M1 1v12M4 1v12" stroke="#888" strokeDasharray="1 1" /></Ic>
        <Ic w={8} h={8}><path d="M1 1l6 6M7 1L1 7" stroke="#ddd" strokeWidth="1.600" /></Ic>
        <Ic w={12} h={12}><path d="M4 4l6.500 6.500" stroke="#ccc" strokeWidth="2" /><path d="M5 1a3 3 0 1 0 .5 3.500L3.500 3z" fill="#ccc" /></Ic>
      </CommandTools>
      <CommandPrompt aria-label="最近使用的命令">
        <Ic w={11} h={10}><rect width="11" height="10" rx="1" fill="#8b8fa5" /><path d="M2 2.500L5 5 2 7.500M6 8h3.500" stroke="#e6e6ee" /></Ic>
        <SmallCaret $c="#555" />
      </CommandPrompt>
      <CommandInput aria-label="命令" placeholder="键入命令" />
      <Up />
    </CommandLine>
    <Ucs width="64" height="60" fill="none" aria-hidden="true">
      <path d="M10.500 14v38M7.500 47.500h6v6h-6z" stroke="#d0d0d0" />
      <path d="M12 2.500l4.500 5 4.500-5M16.500 7.500V13" stroke="#c4c4c4" />
      <path d="M14 51.500h36" stroke="#b4c4b4" strokeOpacity=".6" />
      <path d="M50 40l10 9M60 40l-10 9" stroke="#dfe8df" />
    </Ucs>
  </Canvas>
);

const Bottom = () => (
  <BottomBar>
    <LayoutTabs>
      <LayoutTab $active>模型</LayoutTab>
      <LayoutTab>布局1</LayoutTab>
      <LayoutTab>布局2</LayoutTab>
      <AddTab $down aria-label="新建布局"><Plus /></AddTab>
    </LayoutTabs>
    <StatusBar>
      <StatusGroup $w={70}>
        <StatusButton $strong>模型</StatusButton>
        <StatusButton $on aria-label="栅格"><Ic w={12} h={12}><path d="M3 0v12M6.500 0v12M10 0v12M0 2.500h12M0 6h12M0 9.500h12" stroke="#e6eefa" /></Ic></StatusButton>
        <StatusButton aria-label="捕捉"><Ic w={11} h={11}><path d="M.5 1.500h10M.5 5.500h10M.5 9.500h10" stroke={G} strokeWidth="2" strokeDasharray="2 2" /></Ic></StatusButton>
        <Caret />
      </StatusGroup>
      <StatusGroup $w={75}>
        <StatusButton aria-label="正交"><Ic w={12} h={12}><path d="M1.500 0v11H12M1.500 7h4v4" stroke={G} /></Ic></StatusButton>
        <StatusButton aria-label="极轴"><Ic w={13} h={12}><circle cx="6" cy="6.500" r="4.500" stroke={G} strokeWidth="1.200" /><path d="M6 6.500h7M6 6.500L11 1" stroke={G} /></Ic></StatusButton>
        <Caret />
        <StatusButton aria-label="等轴测"><Ic w={12} h={12}><path d="M6 0v12" stroke="#55b070" strokeWidth="1.500" /><path d="M1 1l10 10" stroke="#c07060" /><path d="M8 7l3 4" stroke="#888" /></Ic></StatusButton>
        <Caret />
      </StatusGroup>
      <StatusGroup $w={48}>
        <StatusButton aria-label="对象捕捉追踪"><Ic w={13} h={12}><path d="M11 1L1 10h12" stroke={G} strokeWidth="1.200" /></Ic></StatusButton>
        <StatusButton aria-label="对象捕捉"><Ic w={13} h={13}><rect x="2.500" y="2.500" width="9" height="9" stroke={G} /><rect x=".5" y=".5" width="4" height="4" fill="#535353" stroke="#e8a060" /></Ic></StatusButton>
        <Caret />
      </StatusGroup>
      <StatusGroup $w={19}>
        <StatusButton aria-label="线宽"><Ic w={12} h={12}><path d="M0 1.500h12M0 5h7M8 5h4" stroke={G} strokeWidth="1.500" /><path d="M0 9.500h7" stroke={G} strokeWidth="3" /><path d="M8 9.500h4" stroke={G} /></Ic></StatusButton>
      </StatusGroup>
      <StatusButton $on aria-label="注释可见性"><Ic w={12} h={14}><path d="M6 1l2 5 3 4v3L7 9.500H5L1 13v-3l3-4z" fill="#fff" /></Ic></StatusButton>
    </StatusBar>
  </BottomBar>
);

const Paw = styled.svg`
  position: absolute;
  right: 128px;
  bottom: 90px;
`;

const Orb = styled.svg`
  position: absolute;
  z-index: 5;
  right: 0;
  bottom: 90px;
`;

const LogoBadge = () => (
  <Badge>
    <svg width="44" height="60" viewBox="0 0 44 60" fill="#d2d2d2" aria-hidden="true">
      <path d="M4 8l6 3 5 0 3 3-1 1 2 1c-1 2-4 1-6 2-1 4 0 8 3 10 6 4 13 3 19 6 5 2 5 5 3 9v15h-4l-1-12-3-4c-5 1-9 1-13 0l-4 16H9l3-15C7 39 1 33 2 26c1-5 4-7 5-12-2-1-3-3-3-6z" />
      <g fill="none" stroke="#d2d2d2" strokeWidth="1.300" strokeLinecap="round">
        <path d="M13 11c4-3 8-1 14-1 7 1 13-2 17-8M14 10c-2-3-2-5-1-8M15 9c2-2 2-4 2-7M19 9c2-2 2-5 4-7M26 6c3 1 7 2 13 0M20 11c4 3 9 5 14 1" />
      </g>
    </svg>
    <BadgeText>
      <BadgeName><BadgeLatin>3D</BadgeLatin>溜溜网</BadgeName>
      <BadgeSite>3D66.COM</BadgeSite>
    </BadgeText>
  </Badge>
);

export default function App() {
  return (
    <Page>
      <Global />
      <TopHeader />
      <RibbonBar />
      <FileTabs>
        <FileTab>开始</FileTab>
        <FileTab $active>
          Drawing4*
          <Ic w={6} h={6}><path d="M.5.5l5 5M5.500.5l-5 5" stroke="#444" strokeWidth="1.400" /></Ic>
        </FileTab>
        <AddTab aria-label="新图形"><Plus /></AddTab>
      </FileTabs>
      <Workspace />
      <Bottom />
      <Paw width="32" height="16" aria-hidden="true">
        <ellipse cx="8" cy="10" rx="6" ry="10" fill="#b4b4b4" /><ellipse cx="23" cy="11" rx="7" ry="10" fill="#b4b4b4" />
      </Paw>
      <Orb width="12" height="12" aria-hidden="true"><circle cx="11" cy="12" r="10" fill="#8fd3a4" stroke="#e8f5ea" strokeWidth="2" /></Orb>
      <LogoBadge />
    </Page>
  );
}
